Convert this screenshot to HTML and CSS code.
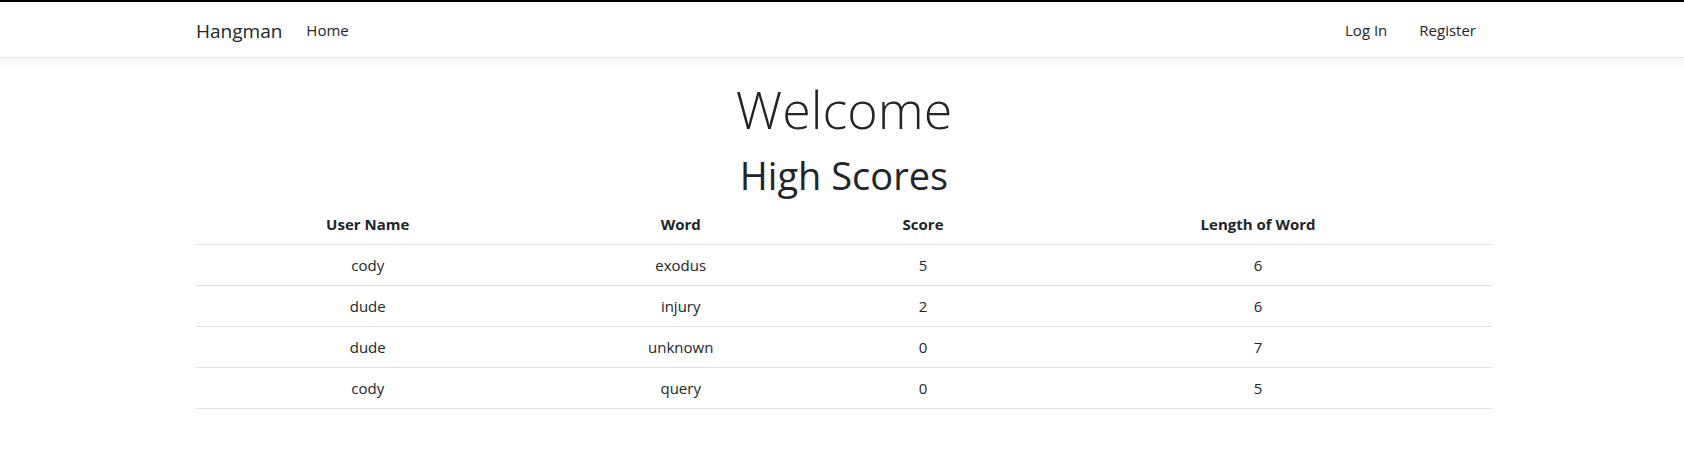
FILE: index.html
```html
<!DOCTYPE html>
<html lang="en">
<head>
<meta charset="utf-8">
<title>Hangman</title>
<link rel="stylesheet" href="styles.css">
</head>
<body>
<header>
  <nav class="navbar">
    <div class="container nav-inner">
      <a class="brand" href="#">Hangman</a>
      <ul class="nav-list grow">
        <li><a class="nav-link" href="#">Home</a></li>
      </ul>
      <ul class="nav-list">
        <li><a class="nav-link wide" href="#">Log In</a></li>
        <li><a class="nav-link wide" href="#">Register</a></li>
      </ul>
    </div>
  </nav>
</header>
<main class="container">
  <div class="hero">
    <h1 class="display">Welcome</h1>
    <h2 class="subtitle">High Scores</h2>
  </div>
  <table class="scores">
    <colgroup>
      <col class="c-user">
      <col class="c-word">
      <col class="c-score">
      <col class="c-len">
    </colgroup>
    <thead>
      <tr><th>User Name</th><th>Word</th><th>Score</th><th>Length of Word</th></tr>
    </thead>
    <tbody>
      <tr><td>cody</td><td>exodus</td><td>5</td><td>6</td></tr>
      <tr><td>dude</td><td>injury</td><td>2</td><td>6</td></tr>
      <tr><td>dude</td><td>unknown</td><td>0</td><td>7</td></tr>
      <tr><td>cody</td><td>query</td><td>0</td><td>5</td></tr>
    </tbody>
  </table>
</main>
</body>
</html>
```

FILE: styles.css
```css
* { box-sizing: border-box; }
html, body { margin: 0; padding: 0; }
body {
  font-family: "Open Sans", "Noto Sans", "Liberation Sans", sans-serif;
  font-size: 16px;
  line-height: 1.5;
  color: #212529;
  background: #fff;
}
.container {
  width: 1296px;
  margin-left: calc(50% - 646px);
}
.navbar {
  border-top: 2px solid #000;
  border-bottom: 1px solid #dee2e6;
  box-shadow: 0 4px 12px rgba(0,0,0,.05);
  background: #fff;
  margin-bottom: 16px;
}
.nav-inner {
  display: flex;
  align-items: center;
  height: 55px;
  padding-top: 2px;
}
.brand {
  font-size: 19px;
  color: #212529;
  text-decoration: none;
  margin-right: 16px;
  line-height: 30px;
}
.nav-list {
  list-style: none;
  display: flex;
  margin: 0;
  padding: 0;
}
.grow { flex: 1; }
.nav-link {
  display: block;
  padding: 8px 8px;
  font-size: 15px;
  color: #212529;
  text-decoration: none;
}
.nav-link.wide { padding: 8px 16px; }
.hero { text-align: center; }
.display {
  font-size: 52px;
  font-weight: 300;
  line-height: 1.2;
  margin: 0;
  padding-top: 4px;
}
.subtitle {
  font-size: 38px;
  font-weight: 400;
  line-height: 1.2;
  margin: 13px 0 5px;
}
.scores {
  width: 100%;
  border-collapse: collapse;
  text-align: center;
  font-size: 15px;
}
.c-user { width: 26.5%; }
.c-word { width: 21.8%; }
.c-score { width: 15.6%; }
.c-len { width: 36.1%; }
.scores th, .scores td {
  padding: 8px;
  height: 41px;
  border-bottom: 1px solid #dee2e6;
}
.scores th { font-weight: 700; }
```
